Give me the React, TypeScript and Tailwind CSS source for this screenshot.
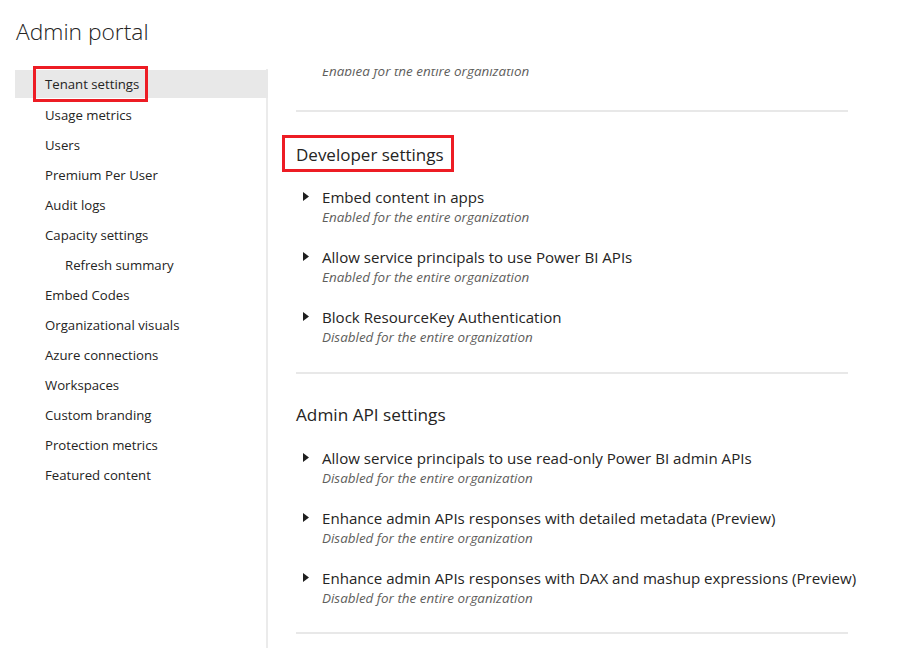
import React from "react";

const FONT = { fontFamily: '"Open Sans", "Noto Sans", Arial, sans-serif' };

const navItems: { label: string; indent?: boolean; selected?: boolean }[] = [
  { label: "Tenant settings", selected: true },
  { label: "Usage metrics" },
  { label: "Users" },
  { label: "Premium Per User" },
  { label: "Audit logs" },
  { label: "Capacity settings" },
  { label: "Refresh summary", indent: true },
  { label: "Embed Codes" },
  { label: "Organizational visuals" },
  { label: "Azure connections" },
  { label: "Workspaces" },
  { label: "Custom branding" },
  { label: "Protection metrics" },
  { label: "Featured content" },
];

function Caret() {
  return (
    <svg width="6" height="9" viewBox="0 0 6 9" className="shrink-0">
      <path d="M0 0 L6 4.5 L0 9 Z" fill="#1f1f1f" />
    </svg>
  );
}

function Item({ title, sub }: { title: string; sub: string }) {
  return (
    <div className="flex">
      <div className="w-[26px] pl-[7px] pt-[5px]">
        <Caret />
      </div>
      <div className="flex flex-col">
        <div className="h-[20px] leading-[20px] text-[15.1px] text-[#252423] whitespace-nowrap">{title}</div>
        <div className="h-[20px] leading-[20px] text-[13.45px] italic text-[#605e5c] whitespace-nowrap">{sub}</div>
      </div>
    </div>
  );
}

function Divider() {
  return <div className="h-[2px] w-[552px] bg-[#e8e8e8]" />;
}

export default function App() {
  return (
    <div className="w-[916px] h-[648px] bg-white overflow-hidden flex flex-col" style={FONT}>
      <div className="h-[69px] shrink-0 pl-[16px] pt-[16px]">
        <div className="text-[22.8px] font-light leading-[32px] text-[#252423]">Admin portal</div>
      </div>
      <div className="flex flex-1 min-h-0">
        <div className="ml-[15px] w-[253px] shrink-0 border-r-2 border-[#ebebeb] pt-[1px] flex flex-col">
          {navItems.map((n) => (
            <div
              key={n.label}
              className={
                "flex items-center text-[13.2px] text-[#252423] " +
                (n.selected ? "bg-[#e8e8e8] -mr-[2px] h-[28px] pt-[2px] mb-[3px]" : "h-[30px]")
              }
            >
              <span className={"relative " + (n.indent ? "ml-[50px]" : "ml-[30px]")}>
                {n.label}
                {n.selected && (
                  <span className="absolute left-[-12px] right-[-9px] top-[-9px] bottom-[-7px] border-[3px] border-[#ed1c24]" />
                )}
              </span>
            </div>
          ))}
        </div>
        <div className="flex-1 overflow-hidden pl-[28px] flex flex-col">
          <div className="-mt-[8px] pl-[26px] h-[20px] leading-[20px] text-[13.45px] italic text-[#605e5c] whitespace-nowrap">
            Enabled for the entire organization
          </div>
          <div className="mt-[29px]">
            <Divider />
          </div>
          <div className="mt-[31px] h-[24px] leading-[24px] text-[17px] text-[#252423]">
            <span className="relative">
              Developer settings
              <span className="absolute left-[-14px] right-[-10px] top-[-8px] bottom-[-6px] border-[3px] border-[#ed1c24]" />
            </span>
          </div>
          <div className="mt-[20px] flex flex-col gap-[20px]">
            <Item title="Embed content in apps" sub="Enabled for the entire organization" />
            <Item title="Allow service principals to use Power BI APIs" sub="Enabled for the entire organization" />
            <Item title="Block ResourceKey Authentication" sub="Disabled for the entire organization" />
          </div>
          <div className="mt-[25px]">
            <Divider />
          </div>
          <div className="mt-[29px] h-[24px] leading-[24px] text-[17.2px] text-[#252423]">Admin API settings</div>
          <div className="mt-[21px] flex flex-col gap-[20px]">
            <Item
              title="Allow service principals to use read-only Power BI admin APIs"
              sub="Disabled for the entire organization"
            />
            <Item
              title="Enhance admin APIs responses with detailed metadata (Preview)"
              sub="Disabled for the entire organization"
            />
            <Item
              title="Enhance admin APIs responses with DAX and mashup expressions (Preview)"
              sub="Disabled for the entire organization"
            />
          </div>
          <div className="mt-[24px]">
            <Divider />
          </div>
        </div>
      </div>
    </div>
  );
}
